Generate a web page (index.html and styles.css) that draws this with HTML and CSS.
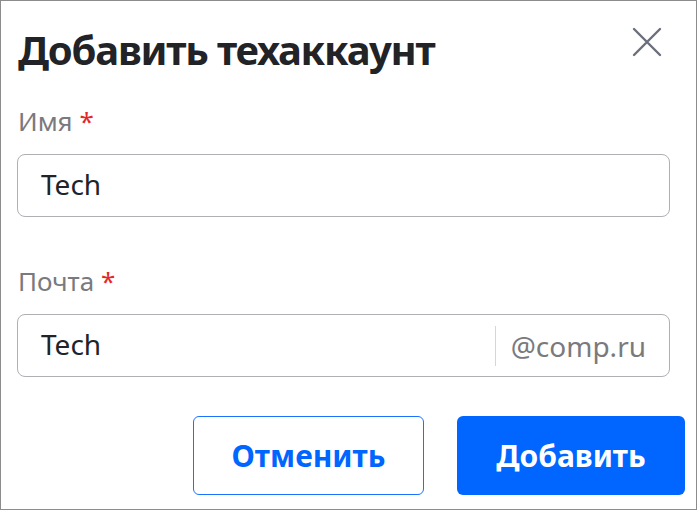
FILE: index.html
```html
<!DOCTYPE html>
<html lang="ru">
<head>
<meta charset="UTF-8">
<meta name="viewport" content="width=device-width, initial-scale=1.0">
<title>Добавить техаккаунт</title>
<link rel="stylesheet" href="styles.css">
</head>
<body>

<div class="dialog">
  <div class="dialog-header">
    <h2>Добавить техаккаунт</h2>
    <span class="close-button">
      <svg width="30" height="30" viewBox="0 0 30 30">
        <path d="M2 2 L28 28 M28 2 L2 28" stroke="#6b6f7a" stroke-width="2.4" stroke-linecap="round" fill="none"/>
      </svg>
    </span>
  </div>

  <div class="field">
    <label>Имя <span class="required">*</span></label>
    <div class="input">
      <span class="input-value">Tech</span>
    </div>
  </div>

  <div class="field">
    <label>Почта <span class="required">*</span></label>
    <div class="input">
      <span class="input-value">Tech</span>
      <span class="input-suffix">@comp.ru</span>
    </div>
  </div>

  <div class="actions">
    <a href="#" class="button button-outline">Отменить</a>
    <a href="#" class="button button-primary">Добавить</a>
  </div>
</div>

</body>
</html>
```

FILE: styles.css
```css
/* General Styles */
body {
  font-family: "Noto Sans", "Open Sans", sans-serif;
  margin: 0;
  padding: 0;
  background-color: #fff;
}

.dialog {
  box-sizing: border-box;
  width: 697px;
  height: 510px;
  border: 1px solid #8c8c8c;
  padding: 0 11px 0 16px;
}

/* Header */
.dialog-header {
  display: flex;
  align-items: flex-start;
  justify-content: space-between;
  box-sizing: border-box;
  height: 104px;
  padding-top: 24px;
}

.dialog-header h2 {
  margin: 0 0 0 1px;
  font-size: 40px;
  line-height: 50px;
  letter-spacing: -1.2px;
  font-weight: 700;
  color: #222326;
}

.close-button {
  display: flex;
  margin-top: 2px;
  margin-right: 23px;
  cursor: pointer;
}

/* Fields */
.field {
  margin-right: 15px;
  margin-bottom: 48px;
}

.field label {
  display: block;
  font-size: 26px;
  line-height: 32px;
  color: #7a7a7e;
  margin: 0 0 17px 1px;
}

.required {
  color: #e5262b;
}

.input {
  display: flex;
  align-items: center;
  height: 63px;
  box-sizing: border-box;
  border: 1px solid #b0b0b4;
  border-radius: 8px;
  padding: 0 23px 3px 23px;
  font-size: 28px;
  color: #222326;
}

.input-value {
  flex: 1;
}

.input-suffix {
  border-left: 1px solid #d6d6d8;
  padding-left: 15px;
  margin-top: 3px;
  line-height: 40px;
  color: #7a7a7e;
}

/* Button Styles */
.actions {
  display: flex;
  justify-content: flex-end;
  gap: 33px;
  margin-top: -9px;
}

.button {
  display: flex;
  align-items: center;
  justify-content: center;
  box-sizing: border-box;
  height: 79px;
  border-radius: 6px;
  font-size: 30px;
  font-weight: 700;
  text-decoration: none;
}

.button-outline {
  width: 231px;
  border: 1px solid #1a73ff;
  color: #0066ff;
}

.button-primary {
  width: 228px;
  background-color: #0066ff;
  color: #fff;
}
```
